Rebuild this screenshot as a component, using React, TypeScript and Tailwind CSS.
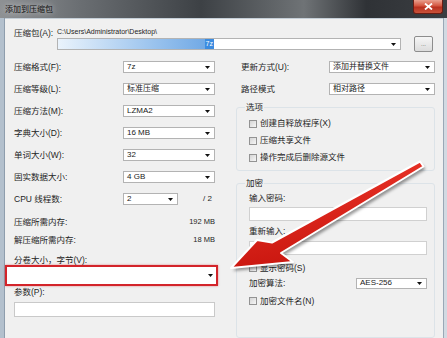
import React from "react";

const Caret = () => (
  <svg width="5" height="3" viewBox="0 0 5 3" className="shrink-0">
    <polygon points="0,0 5,0 2.5,3" fill="#111" />
  </svg>
);

const Combo = ({ value, className }: { value?: string; className: string }) => (
  <div
    className={`flex items-center justify-between border border-[#b3b3b3] bg-white pl-[3px] pr-[4px] ${className}`}
  >
    <span className="text-[8px] leading-none text-[#222]">{value}</span>
    <Caret />
  </div>
);

const Check = ({ label }: { label: string }) => (
  <div className="flex h-[17px] items-center">
    <div className="h-[8px] w-[8px] border border-[#939393] bg-[linear-gradient(135deg,#d5d5d5,#f6f6f6)]" />
    <span className="ml-[3px] text-[8.5px] leading-none">{label}</span>
  </div>
);

const Row = ({ label, children }: { label: string; children: React.ReactNode }) => (
  <div className="flex h-[22px] items-center">
    <span className="w-[109px] text-[8.5px] leading-none">{label}</span>
    {children}
  </div>
);

// arrow outline, tail at upper right, tip at the split-volume box
const arrowPts =
  "420,161.5 272,242.5 257,240 231,268 293,262 281,253 423.5,166.5";

const RedArrow = () => (
  <svg
    className="pointer-events-none absolute left-0 top-0"
    width="447"
    height="338"
    viewBox="0 0 447 338"
  >
    <defs>
      <filter id="blur" x="-20%" y="-20%" width="140%" height="140%">
        <feGaussianBlur stdDeviation="1.5" />
      </filter>
      <linearGradient id="red" x1="0" y1="0" x2="0.3" y2="1">
        <stop offset="0" stopColor="#f0392c" />
        <stop offset="1" stopColor="#c9160f" />
      </linearGradient>
    </defs>
    <polygon points={arrowPts} fill="rgba(0,0,0,0.4)" transform="translate(2,3)" filter="url(#blur)" />
    <polygon points={arrowPts} fill="url(#red)" stroke="#fff" strokeWidth="2" strokeLinejoin="round" />
  </svg>
);

export default function App() {
  return (
    <div className="relative flex h-[338px] w-[447px] flex-col overflow-hidden bg-[#f0f0f0] text-[#1e1e1e] [font-family:'Liberation_Sans','Noto_Sans_CJK_SC',sans-serif]">
      {/* title bar */}
      <div className="flex h-[18px] shrink-0 items-start bg-[linear-gradient(90deg,#8e9194_0%,#6a6e72_18%,#3d4145_45%,#6f7376_68%,#2f3236_82%,#3b3e42_100%)]">
        <span className="pl-[5px] pt-[4px] text-[8px] leading-[11px] text-[#111] [text-shadow:0_0_6px_rgba(255,255,255,0.8)]">
          添加到压缩包
        </span>
        <div className="ml-auto mr-[4px] flex h-[14px] w-[30px] items-center justify-center rounded-b-[3px] border border-t-0 border-[#6b1d14] bg-[linear-gradient(180deg,#e9a08f_0%,#d4553f_45%,#b9301f_55%,#c9533b_100%)]">
          <svg width="9" height="7" viewBox="0 0 9 7">
            <path d="M1 0.5 L8 6.5 M8 0.5 L1 6.5" stroke="#fff" strokeWidth="1.8" />
          </svg>
        </div>
      </div>

      <div className="flex flex-1">
        <div className="w-[5px] border-r border-[#8e9dad] bg-[#b3c0cd]" />

        {/* client area */}
        <div className="flex-1 border-t border-[#c5cfd8] pl-[9px] pr-[8px]">
          {/* archive */}
          <div className="flex pt-[8px]">
            <div className="w-[43px] pt-[1px] text-[8.5px] leading-[11px]">压缩包(A):</div>
            <div className="flex-1">
              <div className="h-[9px] text-[7px] leading-[9px]">C:\Users\Administrator\Desktop\</div>
              <div className="flex h-[16px] items-center">
                <div className="flex h-[12px] w-[344px] items-center border border-[#b3b3b3] bg-white pr-[4px]">
                  <div className="flex h-[10px] w-[156px] items-center justify-end bg-[linear-gradient(90deg,#eaf3fc,#9cc4ee_60%,#6aa5e4)]">
                    <span className="bg-[#3c8ce0] px-[1px] text-[7px] leading-[10px] text-white">7z</span>
                  </div>
                  <div className="ml-auto">
                    <Caret />
                  </div>
                </div>
                <div className="ml-[13px] flex h-[16px] w-[19px] items-center justify-center rounded-[2px] border border-[#8d8d8d] bg-[linear-gradient(180deg,#f6f6f6,#dcdcdc)] text-[6px] leading-none text-[#555]">
                  ...
                </div>
              </div>
            </div>
          </div>

          <div className="mt-[4px] flex">
            {/* left column */}
            <div className="w-[202px]">
              <Row label="压缩格式(F):">
                <Combo className="h-[12px] w-[92px]" value="7z" />
              </Row>
              <Row label="压缩等级(L):">
                <Combo className="h-[12px] w-[92px]" value="标准压缩" />
              </Row>
              <Row label="压缩方法(M):">
                <Combo className="h-[12px] w-[92px]" value="LZMA2" />
              </Row>
              <Row label="字典大小(D):">
                <Combo className="h-[12px] w-[92px]" value="16 MB" />
              </Row>
              <Row label="单词大小(W):">
                <Combo className="h-[12px] w-[92px]" value="32" />
              </Row>
              <Row label="固实数据大小:">
                <Combo className="h-[12px] w-[92px]" value="4 GB" />
              </Row>
              <Row label="CPU 线程数:">
                <Combo className="h-[12px] w-[55px]" value="2" />
                <span className="ml-auto pr-[4px] text-[8px] leading-none">/ 2</span>
              </Row>

              <div className="mt-[3px] flex h-[18px] items-center justify-between pr-[1px] text-[8.5px] leading-none">
                <span>压缩所需内存:</span>
                <span className="text-[7.5px]">192 MB</span>
              </div>
              <div className="flex h-[18px] items-center justify-between pr-[1px] text-[8.5px] leading-none">
                <span>解压缩所需内存:</span>
                <span className="text-[7.5px]">18 MB</span>
              </div>

              <div className="mt-[6px] h-[10px] text-[8.5px] leading-[10px]">分卷大小，字节(V):</div>
              <div className="-ml-[9px] flex h-[21px] w-[213px] items-center justify-end border-2 border-[#d3242a] bg-white pr-[3px] shadow-[0_0_2px_rgba(211,36,42,0.5)]">
                <Caret />
              </div>

              <div className="mt-[1px] h-[10px] text-[8.5px] leading-[10px]">参数(P):</div>
              <div className="mt-[5px] h-[15px] w-[201px] border border-[#c9c9c9] bg-white" />
            </div>

            {/* right column */}
            <div className="ml-[20px] w-[199px]">
              <div className="flex h-[22px] items-center pl-[5px]">
                <span className="w-[88px] text-[8.5px] leading-none">更新方式(U):</span>
                <Combo className="h-[12px] w-[106px]" value="添加并替换文件" />
              </div>
              <div className="flex h-[22px] items-center pl-[5px]">
                <span className="w-[88px] text-[8.5px] leading-none">路径模式</span>
                <Combo className="h-[12px] w-[106px]" value="相对路径" />
              </div>

              <fieldset className="mt-[2px] rounded-[3px] border border-[#dce3e8]">
                <legend className="ml-[8px] px-[1px] text-[8.5px] leading-[11px]">选项</legend>
                <div className="mt-[2px] pb-[4px] pl-[12px]">
                  <Check label="创建自释放程序(X)" />
                  <Check label="压缩共享文件" />
                  <Check label="操作完成后删除源文件" />
                </div>
              </fieldset>

              <fieldset className="mt-[7px] rounded-[3px] border border-[#dce3e8]">
                <legend className="ml-[8px] px-[1px] text-[8.5px] leading-[11px]">加密</legend>
                <div className="pb-[30px] pl-[12px] pr-[7px]">
                  <div className="mt-[4px] h-[11px] text-[8.5px] leading-[11px]">输入密码:</div>
                  <div className="mt-[3px] h-[14px] border border-[#d0d0d0] bg-white" />
                  <div className="mt-[5px] h-[11px] text-[8.5px] leading-[11px]">重新输入:</div>
                  <div className="mt-[4px] h-[14px] border border-[#d0d0d0] bg-white" />
                  <div className="mt-[7px] flex h-[12px] items-center">
                    <div className="h-[8px] w-[8px] border border-[#939393] bg-[linear-gradient(135deg,#d5d5d5,#f6f6f6)]" />
                    <span className="ml-[3px] text-[8.5px] leading-none">显示密码(S)</span>
                  </div>
                  <div className="mt-[3px] flex h-[12px] items-center">
                    <span className="text-[8.5px] leading-none">加密算法:</span>
                    <Combo className="ml-auto h-[11px] w-[71px]" value="AES-256" />
                  </div>
                  <div className="mt-[6px] flex h-[12px] items-center">
                    <div className="h-[8px] w-[8px] border border-[#939393] bg-[linear-gradient(135deg,#d5d5d5,#f6f6f6)]" />
                    <span className="ml-[3px] text-[8.5px] leading-none">加密文件名(N)</span>
                  </div>
                </div>
              </fieldset>
            </div>
          </div>
        </div>

        <div className="w-[4px] border-l border-[#9aa8b6] bg-[#d2dae2]" />
      </div>

      <RedArrow />
    </div>
  );
}
